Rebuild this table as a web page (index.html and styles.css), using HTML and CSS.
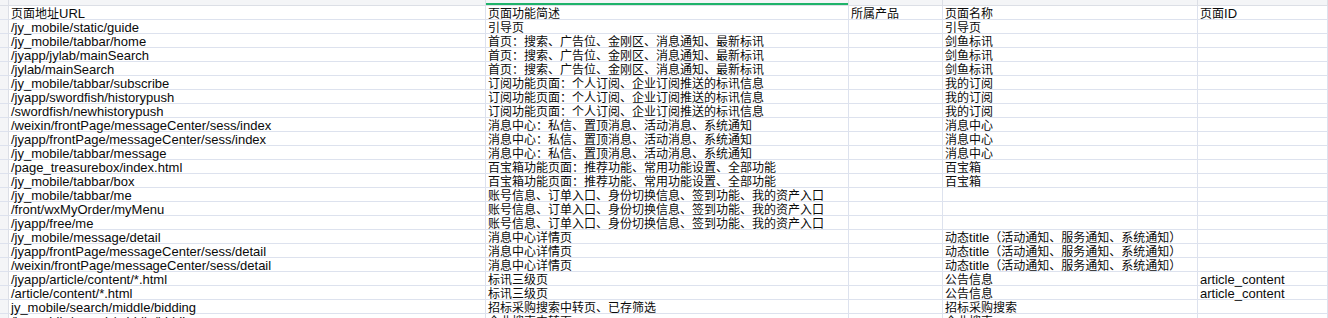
FILE: index.html
```html
<!DOCTYPE html>
<html lang="zh">
<head>
<meta charset="utf-8">
<title>页面清单</title>
<link rel="stylesheet" href="styles.css">
</head>
<body>
<div class="sheet">
  <div class="hd corner"></div>
  <div class="hd"></div>
  <div class="hd active"></div>
  <div class="hd"></div>
  <div class="hd"></div>
  <div class="hd"></div>

  <div class="rn"></div><div class="c">页面地址<span class="lat">URL</span></div><div class="c">页面功能简述</div><div class="c">所属产品</div><div class="c">页面名称</div><div class="c">页面<span class="lat">ID</span></div>
  <div class="rn"></div><div class="c lat">/jy_mobile/static/guide</div><div class="c">引导页</div><div class="c"></div><div class="c">引导页</div><div class="c"></div>
  <div class="rn"></div><div class="c lat">/jy_mobile/tabbar/home</div><div class="c">首页：搜索、广告位、金刚区、消息通知、最新标讯</div><div class="c"></div><div class="c">剑鱼标讯</div><div class="c"></div>
  <div class="rn"></div><div class="c lat">/jyapp/jylab/mainSearch</div><div class="c">首页：搜索、广告位、金刚区、消息通知、最新标讯</div><div class="c"></div><div class="c">剑鱼标讯</div><div class="c"></div>
  <div class="rn"></div><div class="c lat">/jylab/mainSearch</div><div class="c">首页：搜索、广告位、金刚区、消息通知、最新标讯</div><div class="c"></div><div class="c">剑鱼标讯</div><div class="c"></div>
  <div class="rn"></div><div class="c lat">/jy_mobile/tabbar/subscribe</div><div class="c">订阅功能页面：个人订阅、企业订阅推送的标讯信息</div><div class="c"></div><div class="c">我的订阅</div><div class="c"></div>
  <div class="rn"></div><div class="c lat">/jyapp/swordfish/historypush</div><div class="c">订阅功能页面：个人订阅、企业订阅推送的标讯信息</div><div class="c"></div><div class="c">我的订阅</div><div class="c"></div>
  <div class="rn"></div><div class="c lat">/swordfish/newhistorypush</div><div class="c">订阅功能页面：个人订阅、企业订阅推送的标讯信息</div><div class="c"></div><div class="c">我的订阅</div><div class="c"></div>
  <div class="rn"></div><div class="c lat">/weixin/frontPage/messageCenter/sess/index</div><div class="c">消息中心：私信、置顶消息、活动消息、系统通知</div><div class="c"></div><div class="c">消息中心</div><div class="c"></div>
  <div class="rn"></div><div class="c lat">/jyapp/frontPage/messageCenter/sess/index</div><div class="c">消息中心：私信、置顶消息、活动消息、系统通知</div><div class="c"></div><div class="c">消息中心</div><div class="c"></div>
  <div class="rn"></div><div class="c lat">/jy_mobile/tabbar/message</div><div class="c">消息中心：私信、置顶消息、活动消息、系统通知</div><div class="c"></div><div class="c">消息中心</div><div class="c"></div>
  <div class="rn"></div><div class="c lat">/page_treasurebox/index.html</div><div class="c">百宝箱功能页面：推荐功能、常用功能设置、全部功能</div><div class="c"></div><div class="c">百宝箱</div><div class="c"></div>
  <div class="rn"></div><div class="c lat">/jy_mobile/tabbar/box</div><div class="c">百宝箱功能页面：推荐功能、常用功能设置、全部功能</div><div class="c"></div><div class="c">百宝箱</div><div class="c"></div>
  <div class="rn"></div><div class="c lat">/jy_mobile/tabbar/me</div><div class="c">账号信息、订单入口、身份切换信息、签到功能、我的资产入口</div><div class="c"></div><div class="c"></div><div class="c"></div>
  <div class="rn"></div><div class="c lat">/front/wxMyOrder/myMenu</div><div class="c">账号信息、订单入口、身份切换信息、签到功能、我的资产入口</div><div class="c"></div><div class="c"></div><div class="c"></div>
  <div class="rn"></div><div class="c lat">/jyapp/free/me</div><div class="c">账号信息、订单入口、身份切换信息、签到功能、我的资产入口</div><div class="c"></div><div class="c"></div><div class="c"></div>
  <div class="rn"></div><div class="c lat">/jy_mobile/message/detail</div><div class="c">消息中心详情页</div><div class="c"></div><div class="c">动态<span class="lat">title</span>（活动通知、服务通知、系统通知）</div><div class="c"></div>
  <div class="rn"></div><div class="c lat">/jyapp/frontPage/messageCenter/sess/detail</div><div class="c">消息中心详情页</div><div class="c"></div><div class="c">动态<span class="lat">title</span>（活动通知、服务通知、系统通知）</div><div class="c"></div>
  <div class="rn"></div><div class="c lat">/weixin/frontPage/messageCenter/sess/detail</div><div class="c">消息中心详情页</div><div class="c"></div><div class="c">动态<span class="lat">title</span>（活动通知、服务通知、系统通知）</div><div class="c"></div>
  <div class="rn"></div><div class="c lat">/jyapp/article/content/*.html</div><div class="c">标讯三级页</div><div class="c"></div><div class="c">公告信息</div><div class="c lat">article_content</div>
  <div class="rn"></div><div class="c lat">/article/content/*.html</div><div class="c">标讯三级页</div><div class="c"></div><div class="c">公告信息</div><div class="c lat">article_content</div>
  <div class="rn"></div><div class="c lat">jy_mobile/search/middle/bidding</div><div class="c">招标采购搜索中转页、已存筛选</div><div class="c"></div><div class="c">招标采购搜索</div><div class="c"></div>
  <div class="rn"></div><div class="c lat">/jy_mobile/search/middle/bidding</div><div class="c">企业搜索中转页</div><div class="c"></div><div class="c">企业搜索</div><div class="c"></div>
</div>
</body>
</html>
```
FILE: styles.css
```css
html, body {
  margin: 0;
  padding: 0;
  background: #ffffff;
  overflow: hidden;
}

.sheet {
  display: grid;
  grid-template-columns: 9px 477px 363px 94px 255px 1fr;
  grid-auto-rows: 14px;
  grid-template-rows: 6px;
  width: 1328px;
  font-family: "Liberation Sans", Arial, "Noto Sans CJK SC", sans-serif;
  font-size: 12px;
  color: #0a0a0a;
}

.hd {
  box-sizing: border-box;
  background: #f4f5f7;
  border-right: 1px solid #dcdfe6;
  border-bottom: 1px solid #dcdfe6;
  position: relative;
}

.hd.active::after {
  content: "";
  position: absolute;
  left: 0;
  right: 0;
  bottom: 0;
  height: 2px;
  background: #1fb36a;
}

.rn {
  box-sizing: border-box;
  background: #f4f5f7;
  border-right: 1px solid #dcdfe6;
  border-bottom: 1px solid #dde2ee;
}

.c {
  box-sizing: border-box;
  border-right: 1px solid #dde2ee;
  border-bottom: 1px solid #dde2ee;
  padding: 1px 0 0 2px;
  line-height: 14px;
  white-space: nowrap;
}

.lat {
  font-size: 13px;
}
```
